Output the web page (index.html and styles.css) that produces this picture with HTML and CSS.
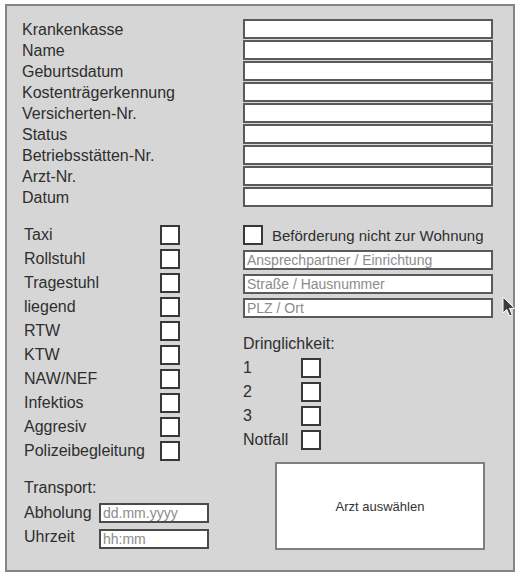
FILE: index.html
```html
<!DOCTYPE html>
<html lang="de">
<head>
<meta charset="utf-8">
<title>Transportschein</title>
<link rel="stylesheet" href="styles.css">
</head>
<body>
<div class="panel">
  <div class="patient">
    <label class="lbl">Krankenkasse</label><input class="field" type="text">
    <label class="lbl">Name</label><input class="field" type="text">
    <label class="lbl">Geburtsdatum</label><input class="field" type="text">
    <label class="lbl">Kostenträgerkennung</label><input class="field" type="text">
    <label class="lbl">Versicherten-Nr.</label><input class="field" type="text">
    <label class="lbl">Status</label><input class="field" type="text">
    <label class="lbl">Betriebsstätten-Nr.</label><input class="field" type="text">
    <label class="lbl">Arzt-Nr.</label><input class="field" type="text">
    <label class="lbl">Datum</label><input class="field" type="text">
  </div>

  <div class="lower">
    <div class="col-left">
      <div class="cbrow"><span>Taxi</span><input class="cb" type="checkbox"></div>
      <div class="cbrow"><span>Rollstuhl</span><input class="cb" type="checkbox"></div>
      <div class="cbrow"><span>Tragestuhl</span><input class="cb" type="checkbox"></div>
      <div class="cbrow"><span>liegend</span><input class="cb" type="checkbox"></div>
      <div class="cbrow"><span>RTW</span><input class="cb" type="checkbox"></div>
      <div class="cbrow"><span>KTW</span><input class="cb" type="checkbox"></div>
      <div class="cbrow"><span>NAW/NEF</span><input class="cb" type="checkbox"></div>
      <div class="cbrow"><span>Infektios</span><input class="cb" type="checkbox"></div>
      <div class="cbrow"><span>Aggresiv</span><input class="cb" type="checkbox"></div>
      <div class="cbrow"><span>Polizeibegleitung</span><input class="cb" type="checkbox"></div>

      <div class="transport">
        <div class="t-head">Transport:</div>
        <div class="t-row"><span>Abholung</span><input class="small" type="text" placeholder="dd.mm.yyyy"></div>
        <div class="t-row t-row--top"><span>Uhrzeit</span><input class="small" type="text" placeholder="hh:mm"></div>
      </div>
    </div>

    <div class="col-right">
      <div class="bef"><input class="cb" type="checkbox"><span class="bef-text">Beförderung nicht zur Wohnung</span></div>
      <input class="field addr" type="text" placeholder="Ansprechpartner / Einrichtung">
      <input class="field addr" type="text" placeholder="Straße / Hausnummer">
      <input class="field addr" type="text" placeholder="PLZ / Ort">

      <div class="d-head">Dringlichkeit:</div>
      <div class="drow"><span>1</span><input class="cb" type="checkbox"></div>
      <div class="drow"><span>2</span><input class="cb" type="checkbox"></div>
      <div class="drow"><span>3</span><input class="cb" type="checkbox"></div>
      <div class="drow"><span>Notfall</span><input class="cb" type="checkbox"></div>

      <button class="doc-btn" type="button">Arzt auswählen</button>
    </div>
  </div>

  <svg class="pointer" width="14" height="22" viewBox="0 0 14 22" aria-hidden="true">
    <path d="M1 1 L1 17 L4.8 13.4 L7.6 20 L10.2 18.9 L7.5 12.4 L12.6 12.4 Z" fill="#3c3c3c" stroke="#ffffff" stroke-width="1" stroke-linejoin="round"/>
  </svg>
</div>
</body>
</html>
```

FILE: styles.css
```css
* { box-sizing: border-box; }

html, body {
  margin: 0;
  padding: 0;
  background: #ffffff;
}

body {
  font-family: "Liberation Sans", Arial, sans-serif;
  font-size: 16px;
  color: #2e2e2e;
}

.panel {
  position: relative;
  margin: 4px 0 0 5px;
  width: 510px;
  height: 568px;
  background: #d6d6d6;
  border: 2px solid #858585;
}

.patient {
  display: grid;
  grid-template-columns: 221px 250px;
  grid-auto-rows: 21px;
  padding: 13px 0 0 15px;
}

.lbl {
  line-height: 21px;
  white-space: nowrap;
}

.field {
  display: block;
  width: 250px;
  height: 20px;
  margin: 0;
  padding: 0 2px;
  background: #ffffff;
  border: 2px solid #5a5a5a;
  font-family: "Liberation Sans", Arial, sans-serif;
  font-size: 14px;
  color: #333333;
  outline: none;
}

.field::placeholder,
.small::placeholder {
  color: #8c8c8c;
  opacity: 1;
}

.lower {
  display: grid;
  grid-template-columns: 219px 250px;
  margin: 15px 0 0 17px;
}

.cb {
  -webkit-appearance: none;
  appearance: none;
  display: block;
  flex: none;
  width: 20px;
  height: 20px;
  margin: 0;
  background: #ffffff;
  border: 2px solid #383838;
}

.cbrow {
  display: grid;
  grid-template-columns: 136px 20px;
  align-items: center;
  height: 24px;
  white-space: nowrap;
}

.transport {
  margin-top: 13px;
}

.t-head {
  height: 24px;
  line-height: 24px;
}

.t-row {
  display: grid;
  grid-template-columns: 75px 110px;
  align-items: center;
  height: 26px;
}

.t-row--top span {
  align-self: start;
  line-height: 21px;
}

.small {
  display: block;
  width: 110px;
  height: 20px;
  margin: 0;
  padding: 0 2px;
  background: #ffffff;
  border: 2px solid #4a4a4a;
  font-family: "Liberation Sans", Arial, sans-serif;
  font-size: 14px;
  color: #333333;
  outline: none;
}

.bef {
  display: flex;
  align-items: center;
  gap: 9px;
  height: 24px;
}

.bef-text {
  white-space: nowrap;
  font-size: 15px;
}

.addr {
  margin-top: 3px;
}

.addr + .addr {
  margin-top: 4px;
}

.d-head {
  margin-top: 14px;
  height: 24px;
  line-height: 24px;
}

.drow {
  display: grid;
  grid-template-columns: 58px 20px;
  align-items: center;
  height: 24px;
}

.doc-btn {
  display: block;
  margin: 10px 0 0 32px;
  width: 210px;
  height: 88px;
  padding: 0;
  background: #ffffff;
  border: 2px solid #7f7f7f;
  font-family: "Liberation Sans", Arial, sans-serif;
  font-size: 13px;
  color: #333333;
}

.pointer {
  position: absolute;
  left: 495px;
  top: 290px;
}
```
